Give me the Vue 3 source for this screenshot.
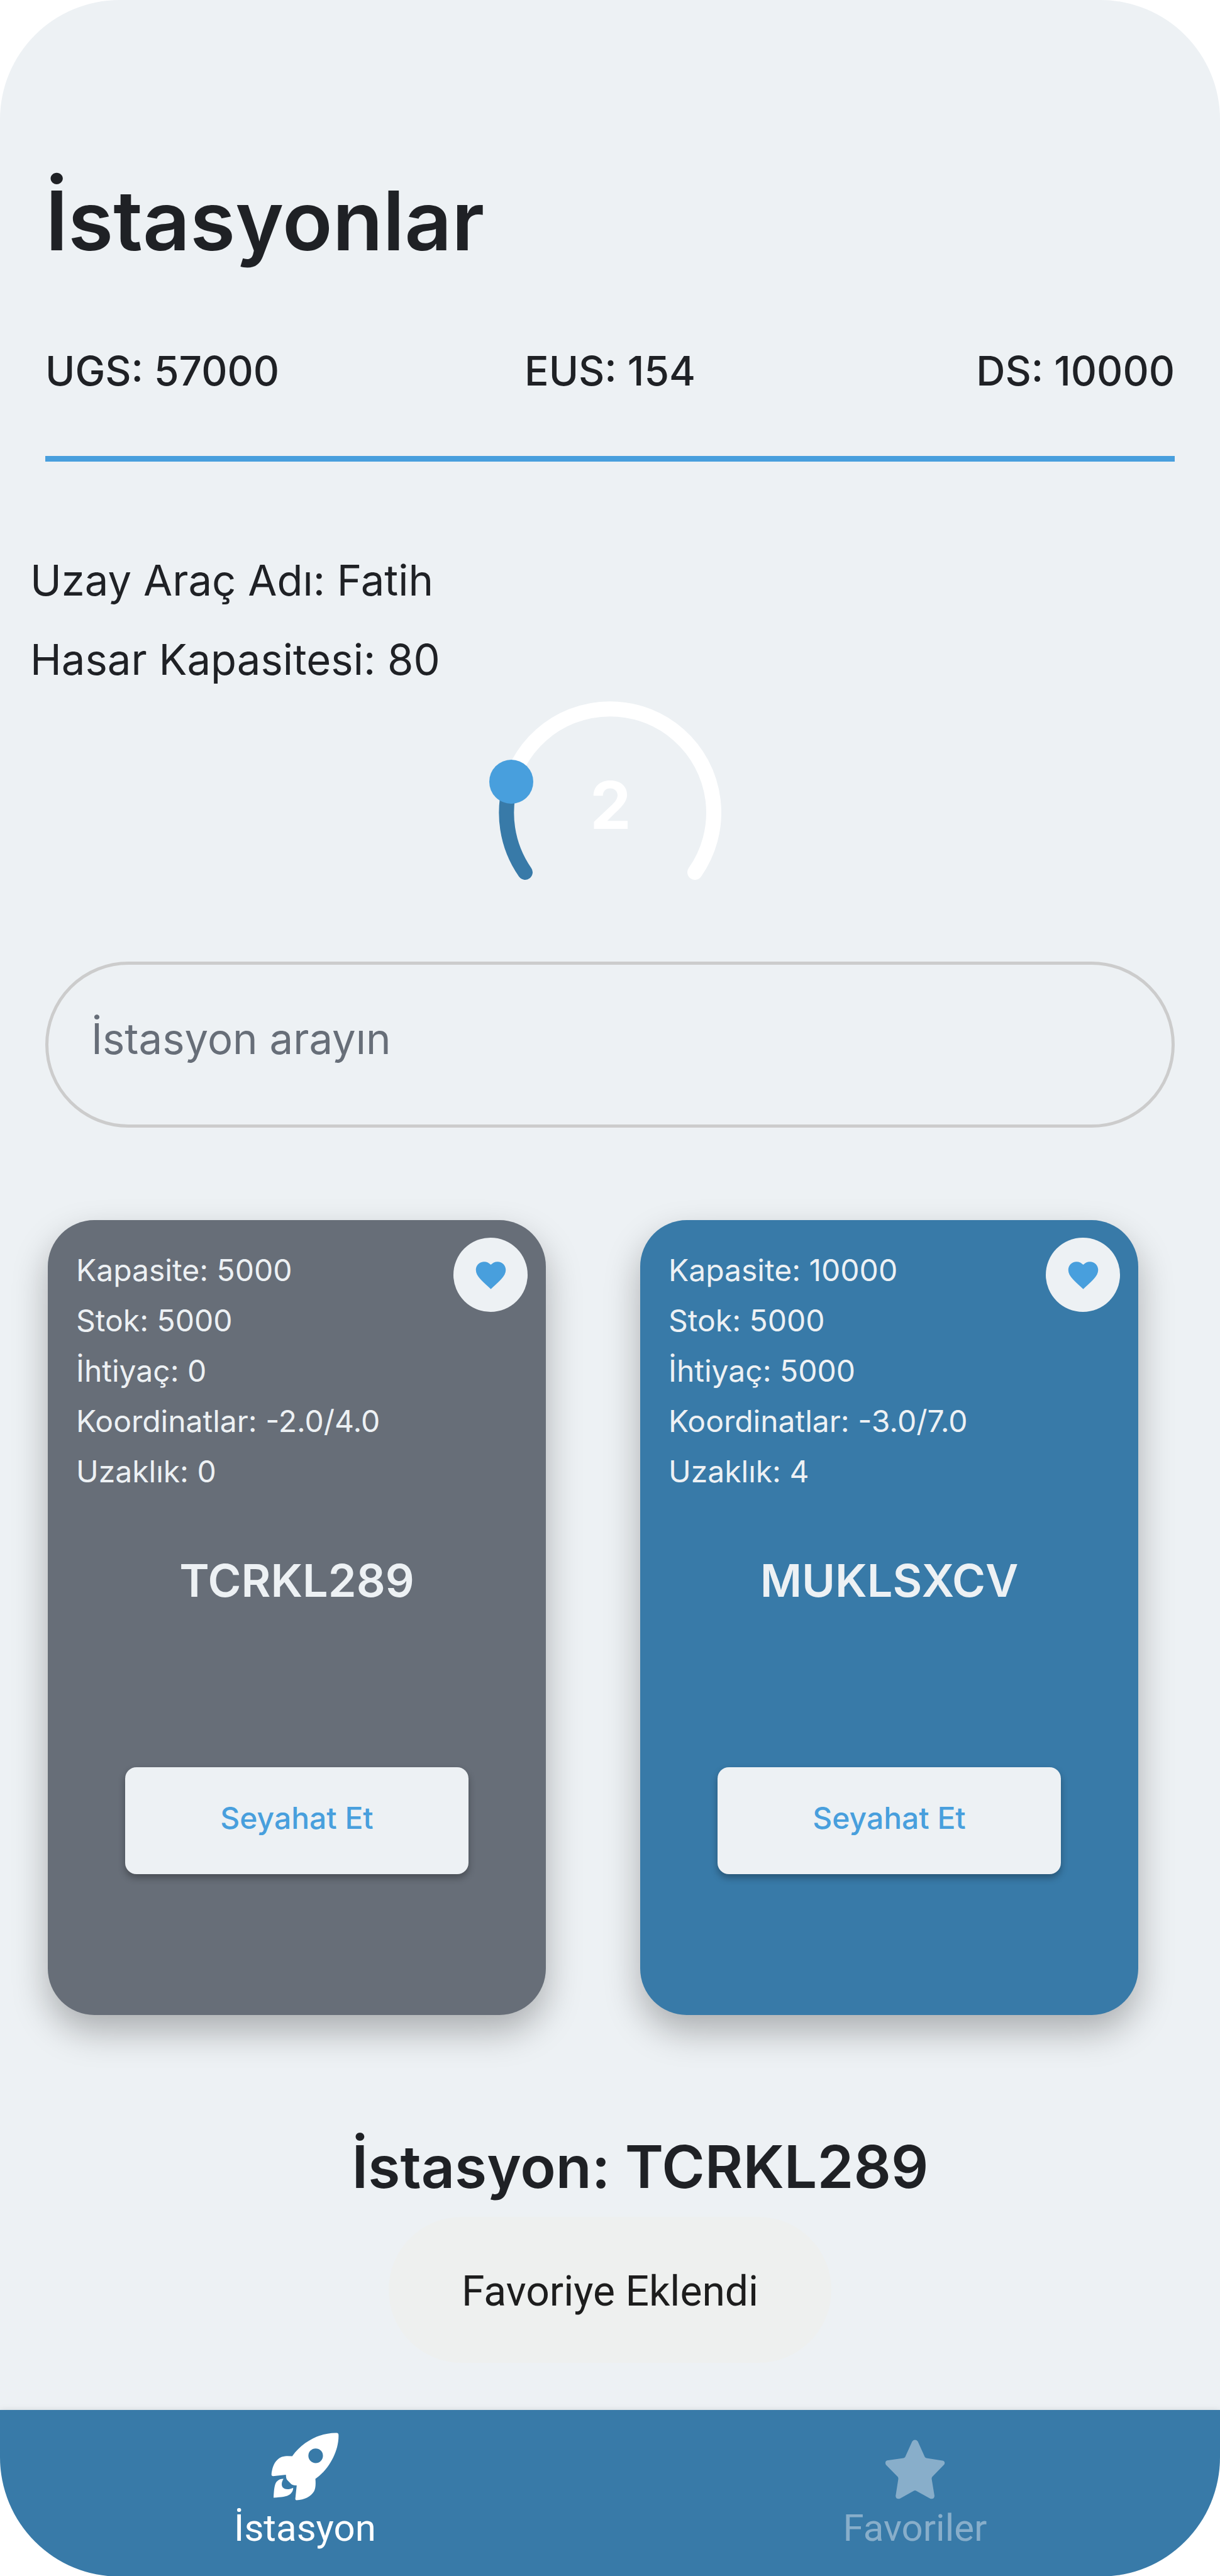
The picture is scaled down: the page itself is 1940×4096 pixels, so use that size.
<script setup>
import { ref } from 'vue'

const query = ref('')
const durability = ref(2)

const stats = ['UGS: 57000', 'EUS: 154', 'DS: 10000']

const stations = [
  {
    name: 'TCRKL289',
    current: true,
    details: ['Kapasite: 5000', 'Stok: 5000', 'İhtiyaç: 0', 'Koordinatlar: -2.0/4.0', 'Uzaklık: 0'],
  },
  {
    name: 'MUKLSXCV',
    current: false,
    details: ['Kapasite: 10000', 'Stok: 5000', 'İhtiyaç: 5000', 'Koordinatlar: -3.0/7.0', 'Uzaklık: 4'],
  },
]
</script>

<template>
  <div class="screen">
    <main class="content">
      <h1 class="title">İstasyonlar</h1>

      <div class="stats">
        <span v-for="stat in stats" :key="stat">{{ stat }}</span>
      </div>

      <div class="ship">
        <p>Uzay Araç Adı: Fatih</p>
        <p>Hasar Kapasitesi: 80</p>
      </div>

      <div class="gauge">
        <svg viewBox="0 0 400 290" aria-hidden="true">
          <path class="track" d="M65 273A165 165 0 1 1 335 273" />
          <path class="progress" d="M65 273A165 165 0 0 1 43 129" />
          <circle class="thumb" cx="43" cy="129" r="35" />
          <text class="value" x="201" y="204">{{ durability }}</text>
        </svg>
        <input v-model="durability" type="range" min="0" max="10" aria-label="Dayanıklılık" />
      </div>

      <input v-model="query" class="search" type="text" placeholder="İstasyon arayın" aria-label="İstasyon arayın" />

      <section class="stations">
        <article v-for="station in stations" :key="station.name" class="card" :class="{ current: station.current }">
          <ul class="details">
            <li v-for="detail in station.details" :key="detail">{{ detail }}</li>
          </ul>
          <button class="favorite" type="button" aria-label="Favorilere ekle">
            <svg viewBox="0 0 24 24" aria-hidden="true">
              <path d="M12 21.35l-1.45-1.32C5.4 15.36 2 12.27 2 8.5 2 5.41 4.42 3 7.5 3c1.74 0 3.41.81 4.5 2.08C13.09 3.81 14.76 3 16.5 3 19.58 3 22 5.41 22 8.5c0 3.77-3.4 6.86-8.55 11.53z" />
            </svg>
          </button>
          <h2 class="name">{{ station.name }}</h2>
          <button class="travel" type="button">Seyahat Et</button>
        </article>
      </section>

      <h2 class="selected">İstasyon: TCRKL289</h2>

      <div class="toast" role="status">Favoriye Eklendi</div>
    </main>

    <nav class="tabs">
      <a class="tab active" href="#istasyon">
        <svg viewBox="243 121 482 484" aria-hidden="true">
          <path fill-rule="evenodd" d="M710 123Q722 123 723 136C727 250 655 385 558 450C562 495 558 521 548 540C524 578 480 600 424 603Q414 602 415 592L425 497L407 496C395 495 388 490 382 484L358 459C350 450 349 440 348 421L256 431Q244 430 245 420C252 345 286 289 355 288L393 289C470 180 600 120 710 123ZM560 234a52 52 0 1 0 0 104a52 52 0 1 0 0-104Z" />
          <path d="M331 450C315 474 316 497 325 511C339 528 369 529 400 514C400 532 392 548 378 560C355 578 315 580 260 585C263 530 266 490 282 471C296 454 313 449 331 450Z" />
        </svg>
        <span>İstasyon</span>
      </a>
      <a class="tab" href="#favoriler">
        <svg viewBox="358 122 482 484" aria-hidden="true">
          <path d="M579 185Q599 163 619 185L669 296Q672 302 680 304L800 322Q816 330 808 348L722 437Q717 443 718 452L738 573Q734 600 708 592L609 538Q599 531 589 538L491 592Q464 600 461 573L480 452Q481 443 476 437L391 350Q382 328 400 320L518 303Q526 301 529 296Z" />
        </svg>
        <span>Favoriler</span>
      </a>
    </nav>
  </div>
</template>

<style>
body {
  margin: 0;
  background: #fff;
}
</style>

<style scoped>
* {
  box-sizing: border-box;
}

.screen {
  --blue: #387aa8;
  --sky: #489fdd;
  --paper: #edf1f4;
  --ink: #1f2125;
  --slate: #676e78;
  display: flex;
  flex-direction: column;
  min-height: 100vh;
  overflow: hidden;
  border-radius: 190px;
  background: var(--paper);
  color: var(--ink);
  font-family: Inter, "Noto Sans", sans-serif;
  font-size: 67px;
}

h1,
h2,
p,
ul {
  margin: 0;
  padding: 0;
}

button,
input {
  font-family: inherit;
}

.content {
  display: flex;
  flex-direction: column;
  flex: 1;
  padding: 276px 72px 75px;
}

.title {
  font-size: 131px;
  font-weight: 600;
  line-height: 150px;
}

.stats {
  display: grid;
  grid-template-columns: repeat(3, 1fr);
  margin-top: 124px;
  padding-bottom: 95px;
  border-bottom: 9px solid var(--sky);
  font-size: 64px;
  font-weight: 500;
  line-height: 80px;
  text-align: center;
}

.stats span:first-child {
  text-align: left;
}

.stats span:last-child {
  text-align: right;
}

.ship {
  margin: 126px -24px 0;
  line-height: 126px;
}

.gauge {
  position: relative;
  align-self: center;
  width: 400px;
  height: 290px;
  margin-top: 2px;
}

.gauge svg {
  display: block;
  width: 100%;
  height: 100%;
}

.gauge path {
  fill: none;
  stroke-width: 24px;
  stroke-linecap: round;
}

.gauge .track {
  stroke: #fff;
}

.gauge .progress {
  stroke: var(--blue);
}

.gauge .thumb {
  fill: var(--sky);
}

.gauge .value {
  fill: #fff;
  font-size: 104px;
  font-weight: 700;
  text-anchor: middle;
}

.gauge input {
  position: absolute;
  inset: 0;
  width: 100%;
  height: 100%;
  margin: 0;
  opacity: 0;
}

.search {
  width: 100%;
  height: 264px;
  margin-top: 125px;
  padding: 0 68px 20px;
  border: 5px solid #ccc;
  border-radius: 132px;
  outline: none;
  background: transparent;
  color: var(--ink);
  font-size: 67px;
}

.search::placeholder {
  color: var(--slate);
  opacity: 1;
}

.stations {
  display: flex;
  gap: 150px;
  margin-top: 147px;
  padding: 0 58px 0 4px;
}

.card {
  position: relative;
  display: flex;
  flex: 1;
  flex-direction: column;
  padding: 40px 45px 224px;
  border-radius: 74px;
  background: var(--blue);
  box-shadow: 0 26px 56px rgba(0, 0, 0, 0.28);
  color: var(--paper);
}

.card.current {
  background: var(--slate);
}

.details {
  font-size: 48px;
  line-height: 80px;
  list-style: none;
}

.favorite {
  position: absolute;
  top: 28px;
  right: 29px;
  display: flex;
  align-items: center;
  justify-content: center;
  width: 118px;
  height: 118px;
  padding: 0;
  border: 0;
  border-radius: 50%;
  background: var(--paper);
}

.favorite svg {
  width: 57px;
  height: 57px;
  fill: var(--sky);
}

.name {
  margin-top: 83px;
  font-size: 72px;
  font-weight: 600;
  line-height: 100px;
  text-align: center;
}

.travel {
  height: 170px;
  margin: 247px 78px 0;
  padding: 0 0 10px;
  border: 0;
  border-radius: 18px;
  background: var(--paper);
  box-shadow: 0 6px 12px rgba(0, 0, 0, 0.3);
  color: var(--sky);
  font-size: 48px;
  font-weight: 500;
}

.selected {
  margin-top: 181px;
  padding-left: 96px;
  font-size: 93px;
  font-weight: 600;
  line-height: 120px;
  text-align: center;
}

.toast {
  align-self: center;
  margin-top: 20px;
  padding: 79px 116px 73px;
  border-radius: 116px;
  background: #eef0ef;
  color: #1d1d1d;
  font-family: Roboto, sans-serif;
  font-size: 66px;
  line-height: 80px;
}

.tabs {
  display: flex;
  padding: 36px 0 43px;
  background: var(--blue);
  box-shadow: 0 0 10px rgba(0, 0, 0, 0.1);
  font-family: Roboto, sans-serif;
  font-size: 60px;
  line-height: 68px;
}

.tab {
  display: flex;
  flex: 1;
  flex-direction: column;
  align-items: center;
  gap: 10px;
  color: #88aeca;
  text-decoration: none;
}

.tab svg {
  width: 108px;
  height: 108px;
  fill: currentColor;
}

.tab.active {
  color: #fff;
}
</style>
